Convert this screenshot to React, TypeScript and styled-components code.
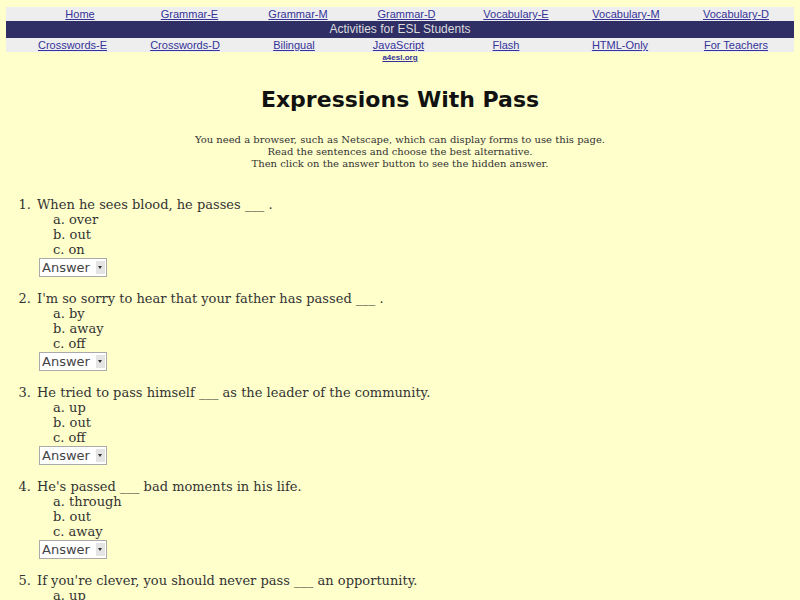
import React from "react";
import styled, { createGlobalStyle } from "styled-components";

const GlobalStyle = createGlobalStyle`
  html, body {
    margin: 0;
    padding: 0;
    background: #ffffcc;
  }
  body {
    color: #333333;
    font-family: "DejaVu Serif", serif;
  }
`;

const Page = styled.div`
  padding: 7px 6px 0 6px;
`;

const NavRow = styled.div<{ $cols: string }>`
  display: grid;
  grid-template-columns: ${(p) => p.$cols};
  background: #eeeeee;
  height: 14px;
  align-items: center;
`;

const NavLink = styled.a`
  font-family: "Liberation Sans", Arial, sans-serif;
  font-size: 11px;
  color: #333399;
  text-decoration: underline;
  text-align: center;
  line-height: 14px;
  cursor: pointer;
`;

const TitleBar = styled.div`
  background: #2f2f66;
  color: #dddddd;
  font-family: "Liberation Sans", Arial, sans-serif;
  font-size: 12px;
  height: 17px;
  line-height: 17px;
  text-align: center;
`;

const SiteLink = styled.a`
  display: block;
  text-align: center;
  font-family: "Liberation Sans", Arial, sans-serif;
  font-size: 8px;
  font-weight: bold;
  color: #333399;
  text-decoration: underline;
  margin-top: 1px;
`;

const Heading = styled.h1`
  margin: 25px 0 0 0;
  text-align: center;
  font-family: "Comic Sans MS", "DejaVu Sans", sans-serif;
  font-weight: bold;
  font-size: 22px;
  color: #111111;
`;

const Intro = styled.p`
  margin: 22px 0 0 0;
  text-align: center;
  font-size: 10px;
  line-height: 12px;
  color: #333333;
`;

const Questions = styled.ol`
  margin: 27px 0 0 0;
  padding-left: 29px;
  font-size: 13px;
  line-height: 15px;
`;

const Question = styled.li`
  margin-bottom: 14px;
  padding-left: 2px;
`;

const Choices = styled.div`
  padding-left: 16px;
`;

const SelectWrap = styled.div`
  position: relative;
  display: inline-block;
  margin: 1px 0 0 2px;
`;

const AnswerSelect = styled.select`
  appearance: none;
  -webkit-appearance: none;
  width: 68px;
  height: 19px;
  border: 1px solid #aaaaaa;
  border-radius: 0;
  background: #ffffff;
  color: #444444;
  font-family: "DejaVu Sans", sans-serif;
  font-size: 13px;
  padding: 0 0 0 2px;
  margin: 0;
`;

const Arrow = styled.span`
  position: absolute;
  right: 2px;
  top: 3px;
  width: 9px;
  height: 13px;
  background: #e4e4e4;
  pointer-events: none;
  &::after {
    content: "";
    position: absolute;
    left: 2px;
    top: 5px;
    border-left: 2.5px solid transparent;
    border-right: 2.5px solid transparent;
    border-top: 3px solid #333333;
  }
`;

const topLinks = [
  "Home",
  "Grammar-E",
  "Grammar-M",
  "Grammar-D",
  "Vocabulary-E",
  "Vocabulary-M",
  "Vocabulary-D",
];

const bottomLinks = [
  "Crosswords-E",
  "Crosswords-D",
  "Bilingual",
  "JavaScript",
  "Flash",
  "HTML-Only",
  "For Teachers",
];

const quiz = [
  { q: "When he sees blood, he passes ___ .", a: ["over", "out", "on"] },
  {
    q: "I'm so sorry to hear that your father has passed ___ .",
    a: ["by", "away", "off"],
  },
  {
    q: "He tried to pass himself ___ as the leader of the community.",
    a: ["up", "out", "off"],
  },
  { q: "He's passed ___ bad moments in his life.", a: ["through", "out", "away"] },
  {
    q: "If you're clever, you should never pass ___ an opportunity.",
    a: ["up", "by", "out"],
  },
];

export default function App() {
  return (
    <>
      <GlobalStyle />
      <Page>
        <NavRow $cols="19px 110px 109px 108px 109px 110px 110px 110px 3px">
          <span />
          {topLinks.map((l) => (
            <NavLink key={l}>{l}</NavLink>
          ))}
        </NavRow>
        <TitleBar>Activities for ESL Students</TitleBar>
        <NavRow $cols="10px 113px 112px 106px 103px 112px 116px 116px">
          <span />
          {bottomLinks.map((l) => (
            <NavLink key={l}>{l}</NavLink>
          ))}
        </NavRow>
        <SiteLink>a4esl.org</SiteLink>
        <Heading>Expressions With Pass</Heading>
        <Intro>
          You need a browser, such as Netscape, which can display forms to use
          this page.
          <br />
          Read the sentences and choose the best alternative.
          <br />
          Then click on the answer button to see the hidden answer.
        </Intro>
        <Questions>
          {quiz.map((item) => (
            <Question key={item.q}>
              {item.q}
              <Choices>
                {item.a.map((c, i) => (
                  <div key={c}>
                    {"abc"[i]}. {c}
                  </div>
                ))}
              </Choices>
              <SelectWrap>
                <AnswerSelect defaultValue="Answer">
                  <option>Answer</option>
                  {item.a.map((c) => (
                    <option key={c}>{c}</option>
                  ))}
                </AnswerSelect>
                <Arrow />
              </SelectWrap>
            </Question>
          ))}
        </Questions>
      </Page>
    </>
  );
}
